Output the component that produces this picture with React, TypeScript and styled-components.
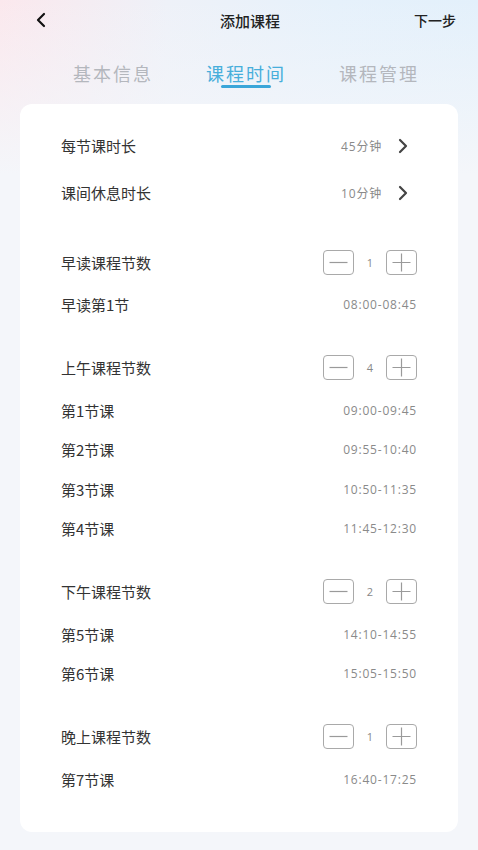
import React from 'react'
import styled, { createGlobalStyle } from 'styled-components'

const GlobalStyle = createGlobalStyle`
  html, body {
    margin: 0;
    padding: 0;
    background: #f4f6fa;
  }
  body {
    font-family: 'Noto Sans CJK SC', 'Noto Sans', sans-serif;
  }
`

const Page = styled.div`
  width: 478px;
  min-height: 850px;
  background:
    linear-gradient(180deg, rgba(244, 246, 250, 0) 0, #f4f6fa 175px),
    linear-gradient(90deg, #fbe8ed 0, #eef1f8 35%, #e6f1fb 70%, #e3f0fb 100%);
  padding-bottom: 17px;
  box-sizing: border-box;
`

const NavBar = styled.div`
  height: 40px;
  display: grid;
  grid-template-columns: 80px 1fr 80px;
  align-items: center;
  padding: 0 22px 0 34px;
`

const BackBtn = styled.div`
  display: flex;
  align-items: center;
`

const Title = styled.div`
  text-align: center;
  font-size: 15px;
  font-weight: 500;
  color: #222;
  padding-left: 10px;
`

const Next = styled.div`
  text-align: right;
  font-size: 14px;
  color: #222;
  font-weight: 500;
`

const Tabs = styled.div`
  display: flex;
  justify-content: center;
  gap: 53px;
  padding: 20px 0 0 14px;
  height: 48px;
  box-sizing: border-box;
`

const Tab = styled.div<{ $active?: boolean }>`
  position: relative;
  font-size: 18px;
  letter-spacing: 2px;
  color: ${p => (p.$active ? '#47aedb' : '#b4b7bd')};
  line-height: 26px;
  height: 28px;
  &::after {
    content: '';
    display: ${p => (p.$active ? 'block' : 'none')};
    position: absolute;
    left: 50%;
    bottom: 0;
    transform: translateX(-50%);
    width: 50px;
    height: 3px;
    border-radius: 2px;
    background: #3aa6d9;
  }
`

const Card = styled.div`
  margin: 16px 20px 0;
  background: #fff;
  border-radius: 12px;
  padding: 18px 41px 33px;
  display: flex;
  flex-direction: column;
  gap: 20px;
`

const Section = styled.div`
  display: flex;
  flex-direction: column;
`

const SettingSection = styled(Section)`
  margin-bottom: 3px;
`

const Row = styled.div<{ $h: number }>`
  height: ${p => p.$h}px;
  display: flex;
  align-items: center;
  justify-content: space-between;
`

const Label = styled.div`
  font-size: 15px;
  color: #333;
`

const Value = styled.div`
  font-family: 'Open Sans', 'Noto Sans CJK SC', sans-serif;
  font-size: 12px;
  letter-spacing: 0.8px;
  color: #8a8a8a;
  display: flex;
  align-items: center;
`

const SetValue = styled(Value)`
  gap: 16px;
  padding-right: 9px;
`

const Stepper = styled.div`
  display: flex;
  align-items: center;
`

const StepBtn = styled.div`
  width: 29px;
  height: 23px;
  border: 1px solid #a9a9a9;
  border-radius: 4px;
  display: flex;
  align-items: center;
  justify-content: center;
`

const Count = styled.div`
  width: 32px;
  text-align: center;
  font-family: 'Open Sans', sans-serif;
  font-size: 11px;
  color: #888;
`

const Chevron = () => (
  <svg width="10" height="16" viewBox="0 0 10 16">
    <path d="M2 2 L8 8 L2 14" fill="none" stroke="#444" strokeWidth="2.2" strokeLinecap="round" strokeLinejoin="round" />
  </svg>
)

const Minus = () => (
  <svg width="19" height="19" viewBox="0 0 19 19">
    <path d="M0.5 9.5 H18.5" stroke="#9a9a9a" strokeWidth="1.2" />
  </svg>
)

const Plus = () => (
  <svg width="19" height="19" viewBox="0 0 19 19">
    <path d="M0.5 9.5 H18.5 M9.5 0.5 V18.5" stroke="#9a9a9a" strokeWidth="1.2" />
  </svg>
)

type Group = { title: string; count: number; items: [string, string][] }

const groups: Group[] = [
  { title: '早读课程节数', count: 1, items: [['早读第1节', '08:00-08:45']] },
  {
    title: '上午课程节数',
    count: 4,
    items: [
      ['第1节课', '09:00-09:45'],
      ['第2节课', '09:55-10:40'],
      ['第3节课', '10:50-11:35'],
      ['第4节课', '11:45-12:30'],
    ],
  },
  {
    title: '下午课程节数',
    count: 2,
    items: [
      ['第5节课', '14:10-14:55'],
      ['第6节课', '15:05-15:50'],
    ],
  },
  { title: '晚上课程节数', count: 1, items: [['第7节课', '16:40-17:25']] },
]

export default function App() {
  return (
    <Page>
      <GlobalStyle />
      <NavBar>
        <BackBtn>
          <svg width="14" height="16" viewBox="0 0 14 16">
            <path d="M10 2 L4 8 L10 14" fill="none" stroke="#111" strokeWidth="2.2" strokeLinecap="round" strokeLinejoin="round" />
          </svg>
        </BackBtn>
        <Title>添加课程</Title>
        <Next>下一步</Next>
      </NavBar>
      <Tabs>
        <Tab>基本信息</Tab>
        <Tab $active>课程时间</Tab>
        <Tab>课程管理</Tab>
      </Tabs>
      <Card>
        <SettingSection>
          <Row $h={47}>
            <Label>每节课时长</Label>
            <SetValue>
              45分钟 <Chevron />
            </SetValue>
          </Row>
          <Row $h={47}>
            <Label>课间休息时长</Label>
            <SetValue>
              10分钟 <Chevron />
            </SetValue>
          </Row>
        </SettingSection>
        {groups.map(g => (
          <Section key={g.title}>
            <Row $h={46}>
              <Label>{g.title}</Label>
              <Stepper>
                <StepBtn>
                  <Minus />
                </StepBtn>
                <Count>{g.count}</Count>
                <StepBtn>
                  <Plus />
                </StepBtn>
              </Stepper>
            </Row>
            {g.items.map(([name, time]) => (
              <Row $h={39.5} key={name}>
                <Label>{name}</Label>
                <Value>{time}</Value>
              </Row>
            ))}
          </Section>
        ))}
      </Card>
    </Page>
  )
}
